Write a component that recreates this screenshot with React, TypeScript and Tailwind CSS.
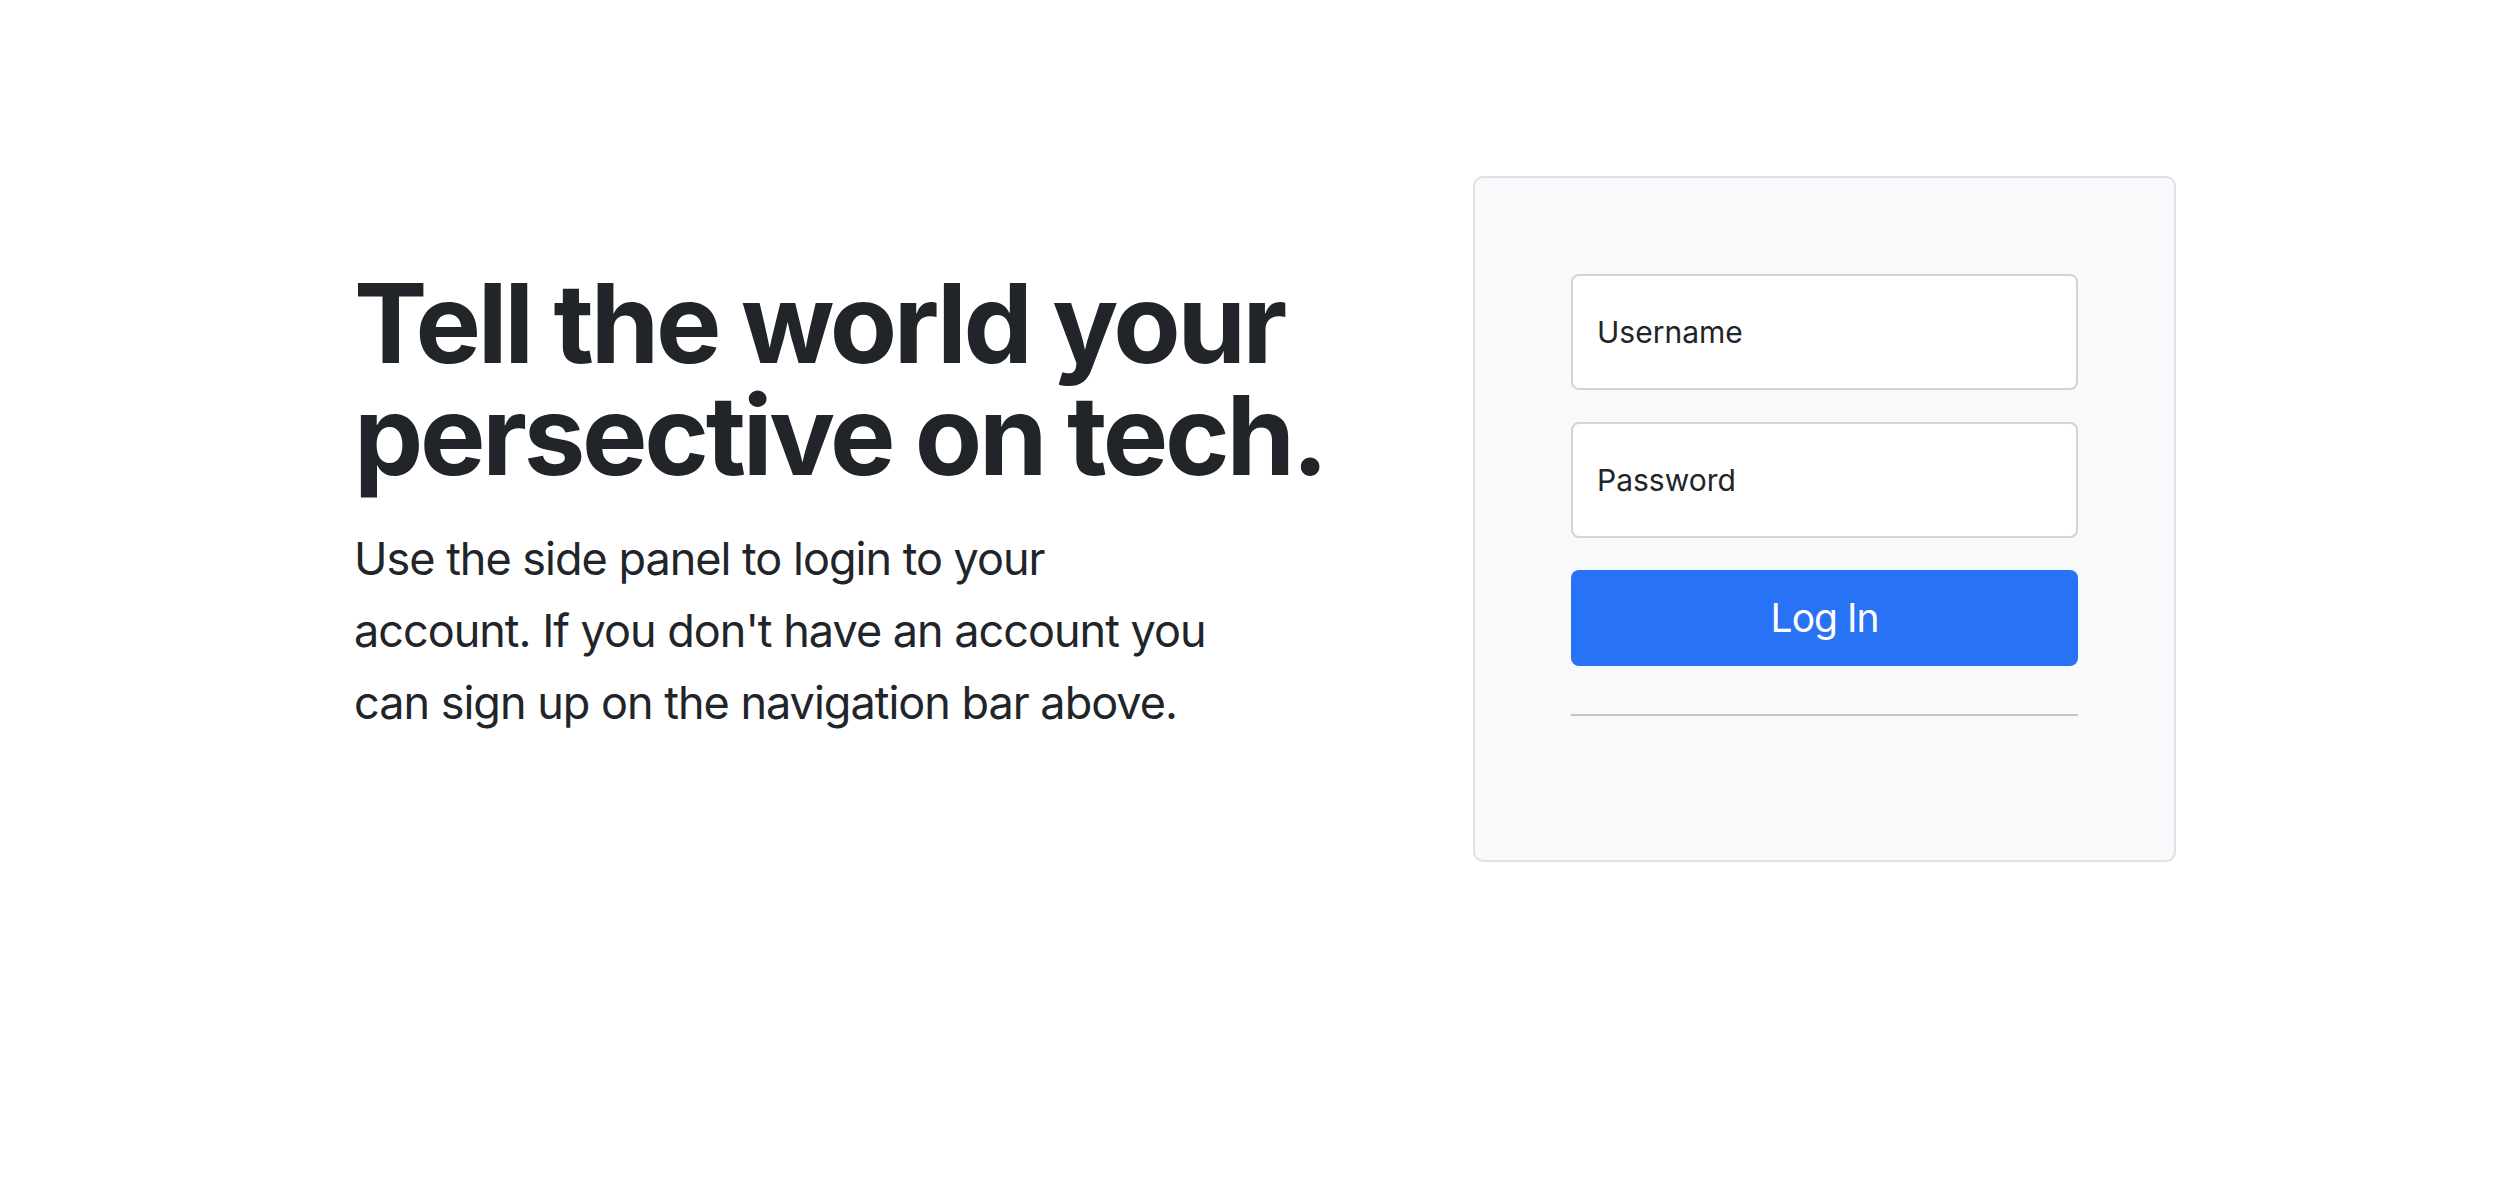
import React from "react";

export default function App() {
  return (
    <div
      className="w-[2500px] h-[1186px] bg-white text-[#212529]"
      style={{ fontFamily: "Inter, 'Noto Sans', sans-serif" }}
    >
      <div className="flex items-center pl-[354px] pt-[176px]">
        <div className="w-[1119px] shrink-0">
          <h1 className="text-[110px] font-bold leading-[112px] mb-[32px] tracking-[-3.3px]">
            Tell the world your
            <br />
            persective on tech.
          </h1>
          <p className="text-[45px] leading-[72px] mb-[32px] tracking-[-1px]">
            <span className="block">Use the side panel to login to your</span>
            <span className="block">account. If you don't have an account you</span>
            <span className="block">can sign up on the navigation bar above.</span>
          </p>
        </div>
        <form className="w-[703px] shrink-0 p-[96px] border-2 border-[#dee2e6] rounded-[10px] bg-[#f8f9fa]">
          <div className="h-[116px] mb-[32px] bg-white border-2 border-[#d0d4d9] rounded-[8px] flex items-center px-[24px] text-[30px]">
            Username
          </div>
          <div className="h-[116px] mb-[32px] bg-white border-2 border-[#d0d4d9] rounded-[8px] flex items-center px-[24px] text-[30px]">
            Password
          </div>
          <button
            type="button"
            className="w-full h-[96px] rounded-[8px] bg-[#2872f5] text-white text-[39px] tracking-[-1px] flex items-center justify-center"
          >
            Log In
          </button>
          <hr className="mt-[48px] mb-[48px] border-0 h-[2px] bg-[#c4c5c8]" />
        </form>
      </div>
    </div>
  );
}
